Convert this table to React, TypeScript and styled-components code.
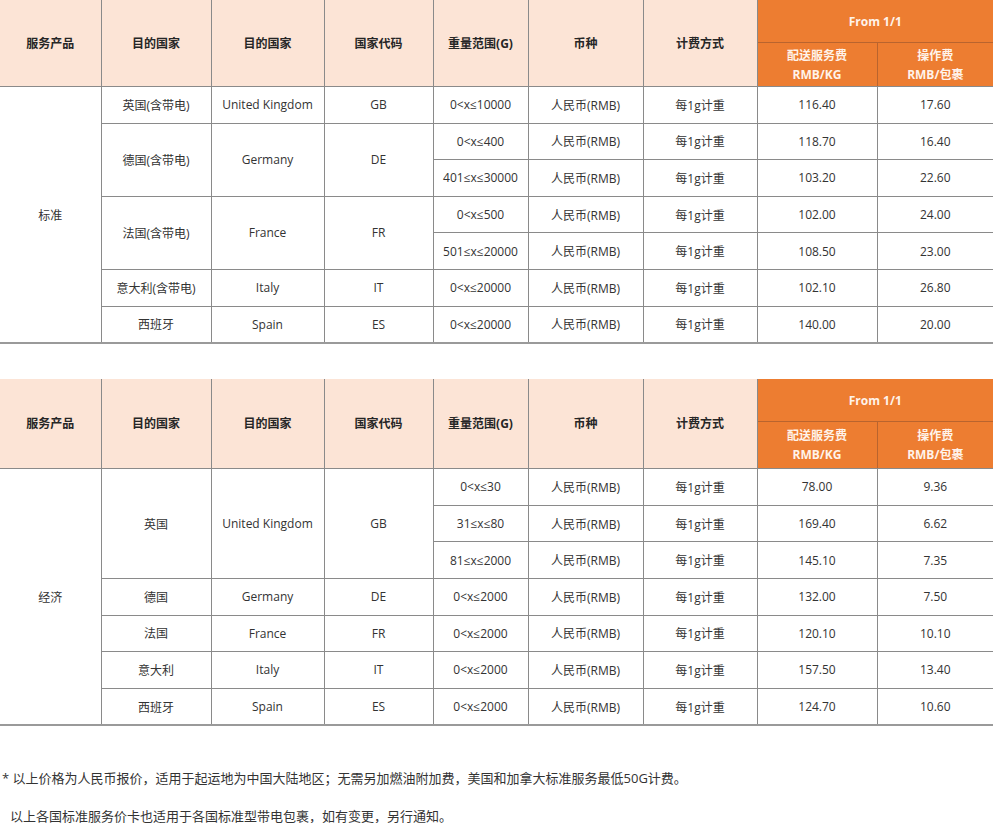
import React from "react";
import styled, { createGlobalStyle, css } from "styled-components";

const Global = createGlobalStyle`
  html, body { margin: 0; padding: 0; background: #ffffff; }
  body {
    font-family: "Open Sans", "Noto Sans CJK SC", sans-serif;
    color: #333333;
  }
`;

const Page = styled.div`
  width: 993px;
  display: flex;
  flex-direction: column;
`;

const Table = styled.table<{ $gapAfter: number }>`
  width: 993px;
  border-collapse: collapse;
  table-layout: fixed;
  margin-bottom: ${(p) => p.$gapAfter}px;
  font-size: 12px;
  border-bottom: 2px solid #9a9a9a;
`;

const HeadCell = styled.th<{ $tone: "peach" | "orange"; $h: number; $edge?: boolean }>`
  height: ${(p) => p.$h}px;
  padding: 0 4px;
  font-weight: 700;
  font-size: 12px;
  line-height: 19px;
  text-align: center;
  vertical-align: middle;
  border: 1px solid #8a8a8a;
  border-top: none;
  ${(p) =>
    p.$tone === "peach"
      ? css`
          background: #fce4d6;
          color: #262626;
        `
      : css`
          background: #ed7d31;
          color: #fff3ea;
          border-color: #b9642e;
          border-bottom-color: #8a8a8a;
        `}
  &:first-child { border-left: none; }
  &:last-child { border-right: none; }
  ${(p) =>
    p.$edge &&
    css`
      border-bottom: 1px solid #b9642e;
    `}
`;

const Cell = styled.td`
  height: 35.6px;
  padding: 0 4px;
  text-align: center;
  vertical-align: middle;
  border: 1px solid #8a8a8a;
  color: #333333;
  white-space: nowrap;
  &:first-child { border-left: none; }
  &:last-child { border-right: none; }
`;

const EdgeCell = styled(Cell)`
  border-left: none;
`;

const RightCell = styled(Cell)`
  border-right: none;
`;

const Notes = styled.div`
  display: flex;
  flex-direction: column;
  gap: 25px;
  padding-top: 46px;
  font-size: 13px;
  line-height: 13px;
  color: #333333;
`;

const Note = styled.p<{ $indent: number }>`
  margin: 0;
  padding-left: ${(p) => p.$indent}px;
`;

type Range = [string, string, string];
type Country = { cn: string; en: string; code: string; ranges: Range[] };
type Group = { product: string; countries: Country[]; head: [number, number]; gap: number };

const widths = [101, 110, 113, 109, 95, 115, 114, 120, 116];

const groups: Group[] = [
  {
    product: "标准",
    head: [42, 43],
    gap: 35,
    countries: [
      { cn: "英国(含带电)", en: "United Kingdom", code: "GB", ranges: [["0<x≤10000", "116.40", "17.60"]] },
      {
        cn: "德国(含带电)",
        en: "Germany",
        code: "DE",
        ranges: [
          ["0<x≤400", "118.70", "16.40"],
          ["401≤x≤30000", "103.20", "22.60"],
        ],
      },
      {
        cn: "法国(含带电)",
        en: "France",
        code: "FR",
        ranges: [
          ["0<x≤500", "102.00", "24.00"],
          ["501≤x≤20000", "108.50", "23.00"],
        ],
      },
      { cn: "意大利(含带电)", en: "Italy", code: "IT", ranges: [["0<x≤20000", "102.10", "26.80"]] },
      { cn: "西班牙", en: "Spain", code: "ES", ranges: [["0<x≤20000", "140.00", "20.00"]] },
    ],
  },
  {
    product: "经济",
    head: [42, 46],
    gap: 0,
    countries: [
      {
        cn: "英国",
        en: "United Kingdom",
        code: "GB",
        ranges: [
          ["0<x≤30", "78.00", "9.36"],
          ["31≤x≤80", "169.40", "6.62"],
          ["81≤x≤2000", "145.10", "7.35"],
        ],
      },
      { cn: "德国", en: "Germany", code: "DE", ranges: [["0<x≤2000", "132.00", "7.50"]] },
      { cn: "法国", en: "France", code: "FR", ranges: [["0<x≤2000", "120.10", "10.10"]] },
      { cn: "意大利", en: "Italy", code: "IT", ranges: [["0<x≤2000", "157.50", "13.40"]] },
      { cn: "西班牙", en: "Spain", code: "ES", ranges: [["0<x≤2000", "124.70", "10.60"]] },
    ],
  },
];

function PriceTable({ group }: { group: Group }) {
  const total = group.countries.reduce((n, c) => n + c.ranges.length, 0);
  const rows: React.ReactNode[] = [];
  group.countries.forEach((c, ci) => {
    c.ranges.forEach((r, ri) => {
      const first = ci === 0 && ri === 0;
      rows.push(
        <tr key={`${ci}-${ri}`}>
          {first && <EdgeCell rowSpan={total}>{group.product}</EdgeCell>}
          {ri === 0 && <Cell rowSpan={c.ranges.length}>{c.cn}</Cell>}
          {ri === 0 && <Cell rowSpan={c.ranges.length}>{c.en}</Cell>}
          {ri === 0 && <Cell rowSpan={c.ranges.length}>{c.code}</Cell>}
          <Cell>{r[0]}</Cell>
          <Cell>人民币(RMB)</Cell>
          <Cell>每1g计重</Cell>
          <Cell>{r[1]}</Cell>
          <RightCell>{r[2]}</RightCell>
        </tr>
      );
    });
  });
  const [h1, h2] = group.head;
  return (
    <Table $gapAfter={group.gap}>
      <colgroup>
        {widths.map((w, i) => (
          <col key={i} style={{ width: w }} />
        ))}
      </colgroup>
      <thead>
        <tr>
          <HeadCell $tone="peach" $h={h1} rowSpan={2}>服务产品</HeadCell>
          <HeadCell $tone="peach" $h={h1} rowSpan={2}>目的国家</HeadCell>
          <HeadCell $tone="peach" $h={h1} rowSpan={2}>目的国家</HeadCell>
          <HeadCell $tone="peach" $h={h1} rowSpan={2}>国家代码</HeadCell>
          <HeadCell $tone="peach" $h={h1} rowSpan={2}>重量范围(G)</HeadCell>
          <HeadCell $tone="peach" $h={h1} rowSpan={2}>币种</HeadCell>
          <HeadCell $tone="peach" $h={h1} rowSpan={2}>计费方式</HeadCell>
          <HeadCell $tone="orange" $h={h1} colSpan={2} $edge>
            From 1/1
          </HeadCell>
        </tr>
        <tr>
          <HeadCell $tone="orange" $h={h2}>
            配送服务费
            <br />
            RMB/KG
          </HeadCell>
          <HeadCell $tone="orange" $h={h2}>
            操作费
            <br />
            RMB/包裹
          </HeadCell>
        </tr>
      </thead>
      <tbody>{rows}</tbody>
    </Table>
  );
}

export default function App() {
  return (
    <>
      <Global />
      <Page>
        {groups.map((g) => (
          <PriceTable key={g.product} group={g} />
        ))}
        <Notes>
          <Note $indent={2}>* 以上价格为人民币报价，适用于起运地为中国大陆地区；无需另加燃油附加费，美国和加拿大标准服务最低50G计费。</Note>
          <Note $indent={10}>以上各国标准服务价卡也适用于各国标准型带电包裹，如有变更，另行通知。</Note>
        </Notes>
      </Page>
    </>
  );
}
